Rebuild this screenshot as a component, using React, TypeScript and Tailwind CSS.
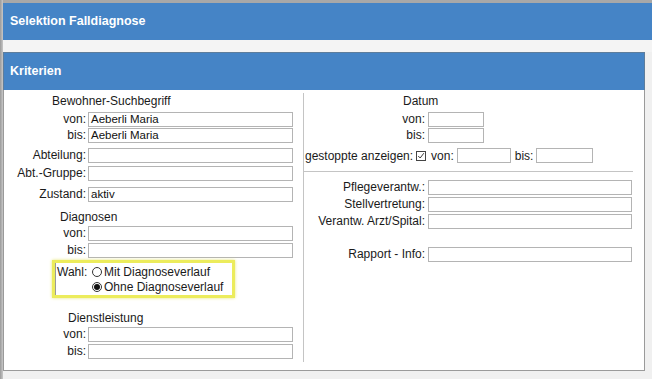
import React from "react";

const FONT = { fontFamily: '"Liberation Sans", Arial, sans-serif' };

function Box({ w, value }: { w: string; value?: string }) {
  return (
    <div
      className={`${w} h-[15px] border border-[#b4b4b4] bg-white flex items-center pl-[2px] text-[11.5px] leading-none text-[#111]`}
    >
      {value}
    </div>
  );
}

function LRow({ label, value, mt }: { label: string; value?: string; mt: string }) {
  return (
    <div className={`flex items-center ${mt}`}>
      <span className="w-[84px] text-right pr-[2px] leading-[15px]">{label}</span>
      <Box w="w-[205px]" value={value} />
    </div>
  );
}

function RRow({ label, mt, w }: { label: string; mt: string; w: string }) {
  return (
    <div className={`flex items-center ${mt}`}>
      <span className="w-[124px] text-right pr-[3px] leading-[15px] whitespace-nowrap">{label}</span>
      <Box w={w} />
    </div>
  );
}

function Radio({ checked }: { checked?: boolean }) {
  return (
    <span className="w-[10px] h-[10px] rounded-full border border-[#333] bg-white flex items-center justify-center shrink-0">
      {checked && <span className="w-[6px] h-[6px] rounded-full bg-[#111]" />}
    </span>
  );
}

export default function App() {
  return (
    <div className="w-[652px] h-[379px] bg-[#f0f0f0] flex overflow-hidden text-[12px] text-[#1a1a1a]" style={FONT}>
      <div className="w-[3px] h-full bg-gradient-to-r from-[#9a9a9a] to-[#c8c8c8]" />
      <div className="flex-1 flex flex-col">
        <div className="h-[3px] bg-[#a8a8a8]" />
        <div className="h-[37px] bg-[#4584c6] flex items-center pl-[7px]">
          <span className="text-white font-bold text-[12.5px]">Selektion Falldiagnose</span>
        </div>
        <div className="h-[12px] bg-[#f4f4f4]" />
        <div className="w-[642px] flex flex-col">
          <div className="h-[38px] bg-[#4584c6] border border-b-0 border-[#5d7d9c] flex items-center pl-[6px]">
            <span className="text-white font-bold text-[12.5px]">Kriterien</span>
          </div>
          <div className="h-[281px] bg-white border border-t-0 border-[#9a9a9a] flex">
            {/* left column */}
            <div className="w-[299px] flex flex-col">
              <div className="ml-[48px] mt-[4px] leading-[14px]">Bewohner-Suchbegriff</div>
              <LRow label="von:" value="Aeberli Maria" mt="mt-[4px]" />
              <LRow label="bis:" value="Aeberli Maria" mt="mt-[1px]" />
              <LRow label="Abteilung:" mt="mt-[5px]" />
              <LRow label="Abt.-Gruppe:" mt="mt-[3px]" />
              <LRow label="Zustand:" value="aktiv" mt="mt-[6px]" />
              <div className="ml-[56px] mt-[8px] leading-[14px]">Diagnosen</div>
              <LRow label="von:" mt="mt-[2px]" />
              <LRow label="bis:" mt="mt-[2px]" />
              <div className="ml-[48px] mt-[2px] w-[183px] h-[38px] border-[3px] border-[#ecec5c] shadow-[0_0_3px_#e6e67a] flex">
                <div className="flex-1 border-l border-[#9a9a9a] flex flex-col pt-[1px]">
                  <div className="flex items-center h-[15px]">
                    <span className="w-[36px] pl-[1px]">Wahl:</span>
                    <Radio />
                    <span className="ml-[2px]">Mit Diagnoseverlauf</span>
                  </div>
                  <div className="flex items-center h-[15px]">
                    <span className="w-[36px]" />
                    <Radio checked />
                    <span className="ml-[2px]">Ohne Diagnoseverlauf</span>
                  </div>
                </div>
              </div>
              <div className="ml-[64px] mt-[13px] leading-[14px]">Dienstleistung</div>
              <LRow label="von:" mt="mt-[2px]" />
              <LRow label="bis:" mt="mt-[2px]" />
            </div>
            {/* separator */}
            <div className="w-px h-[269px] mt-[3px] bg-[#c4c4c4]" />
            {/* right column */}
            <div className="flex-1 flex flex-col">
              <div className="ml-[99px] mt-[4px] leading-[14px]">Datum</div>
              <RRow label="von:" mt="mt-[4px]" w="w-[56px]" />
              <RRow label="bis:" mt="mt-[1px]" w="w-[56px]" />
              <div className="flex items-center mt-[5px] h-[15px] pl-[1px]">
                <span className="whitespace-nowrap">gestoppte anzeigen:</span>
                <span className="ml-[3px] w-[10px] h-[10px] border border-[#444] flex items-center justify-center">
                  <svg viewBox="0 0 10 10" className="w-[8px] h-[8px]">
                    <path d="M1.5 5 L4 7.5 L8.5 1.5" fill="none" stroke="#222" strokeWidth="1.1" />
                  </svg>
                </span>
                <span className="ml-[5px]">von:</span>
                <span className="ml-[3px]"><Box w="w-[54px]" /></span>
                <span className="ml-[4px]">bis:</span>
                <span className="ml-[3px]"><Box w="w-[57px]" /></span>
              </div>
              <div className="mt-[8px] w-[329px] h-px bg-[#c4c4c4]" />
              <RRow label="Pflegeverantw.:" mt="mt-[8px]" w="w-[204px]" />
              <RRow label="Stellvertretung:" mt="mt-[2px]" w="w-[204px]" />
              <RRow label="Verantw. Arzt/Spital:" mt="mt-[2px]" w="w-[204px]" />
              <RRow label="Rapport - Info:" mt="mt-[18px]" w="w-[204px]" />
            </div>
          </div>
        </div>
      </div>
    </div>
  );
}
